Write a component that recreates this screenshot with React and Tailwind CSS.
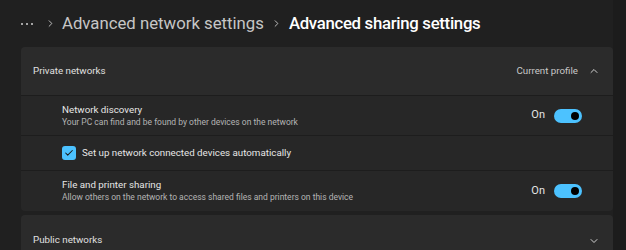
import { ChevronUp, ChevronDown, ChevronRight, Check } from "lucide-react";

function Toggle() {
  return (
    <div className="flex items-center gap-[9px]">
      <span className="text-[11px] text-[#e4e4e4]">On</span>
      <div className="w-[28px] h-[14px] rounded-full bg-[#4cc2ff] flex items-center justify-end pr-[3px]">
        <div className="w-[8px] h-[8px] rounded-full bg-black" />
      </div>
    </div>
  );
}

function SettingRow({ title, desc, h }) {
  return (
    <div className={`${h} flex items-center justify-between pl-[41px] pr-[31px] bg-[#272727] border-t border-[#1d1d1d]`}>
      <div className="flex flex-col leading-none">
        <span className="text-[9.75px] text-[#e6e6e6]">{title}</span>
        <span className="text-[8.5px] text-[#b4b4b4] mt-[3px]">{desc}</span>
      </div>
      <Toggle />
    </div>
  );
}

export default function App() {
  return (
    <div
      className="w-[626px] h-[250px] overflow-hidden bg-[#202020] flex"
      style={{ fontFamily: 'Roboto, "Noto Sans", sans-serif' }}
    >
      <div className="flex-1 pl-[21px]">
        <div className="h-[47px] flex items-center text-[16.75px]">
          <div className="flex items-center gap-[3px] w-[12px] mt-[1px]">
            <div className="w-[2px] h-[2px] rounded-full bg-[#cfcfcf]" />
            <div className="w-[2px] h-[2px] rounded-full bg-[#cfcfcf]" />
            <div className="w-[2px] h-[2px] rounded-full bg-[#cfcfcf]" />
          </div>
          <ChevronRight size={11} strokeWidth={2} className="text-[#c8c8c8] ml-[12px] mr-[6px]" />
          <span className="text-[#c6c6c6]">Advanced network settings</span>
          <ChevronRight size={11} strokeWidth={2} className="text-[#c8c8c8] ml-[7px] mr-[7px]" />
          <span className="text-white font-medium tracking-[-0.3px]">Advanced sharing settings</span>
        </div>

        <div className="rounded-[4px] overflow-hidden w-[592px]">
          <div className="h-[48px] bg-[#2b2b2b] flex items-center justify-between pl-[12px] pr-[13px]">
            <span className="text-[9.75px] text-[#e0e0e0]">Private networks</span>
            <div className="flex items-center gap-[10px]">
              <span className="text-[9.75px] text-[#c8c8c8]">Current profile</span>
              <ChevronUp size={12} strokeWidth={2} className="text-[#d0d0d0]" />
            </div>
          </div>
          <SettingRow
            h="h-[40px]"
            title="Network discovery"
            desc="Your PC can find and be found by other devices on the network"
          />
          <div className="h-[35px] flex items-center pl-[41px] bg-[#272727] border-t border-[#1d1d1d]">
            <div className="w-[14px] h-[14px] rounded-[3px] bg-[#4cc2ff] flex items-center justify-center">
              <Check size={10} strokeWidth={2.5} className="text-[#1a1a1a]" />
            </div>
            <span className="ml-[6px] text-[9.75px] text-[#e6e6e6]">Set up network connected devices automatically</span>
          </div>
          <SettingRow
            h="h-[41px]"
            title="File and printer sharing"
            desc="Allow others on the network to access shared files and printers on this device"
          />
        </div>

        <div className="mt-[4px] rounded-t-[4px] w-[592px] h-[48px] bg-[#2b2b2b] flex items-center justify-between pl-[12px] pr-[13px] pt-[3px]">
          <span className="text-[9.75px] text-[#e0e0e0]">Public networks</span>
          <ChevronDown size={12} strokeWidth={2} className="text-[#d0d0d0]" />
        </div>
      </div>
      <div className="w-[13px] bg-[#1c1c1c]" />
    </div>
  );
}
